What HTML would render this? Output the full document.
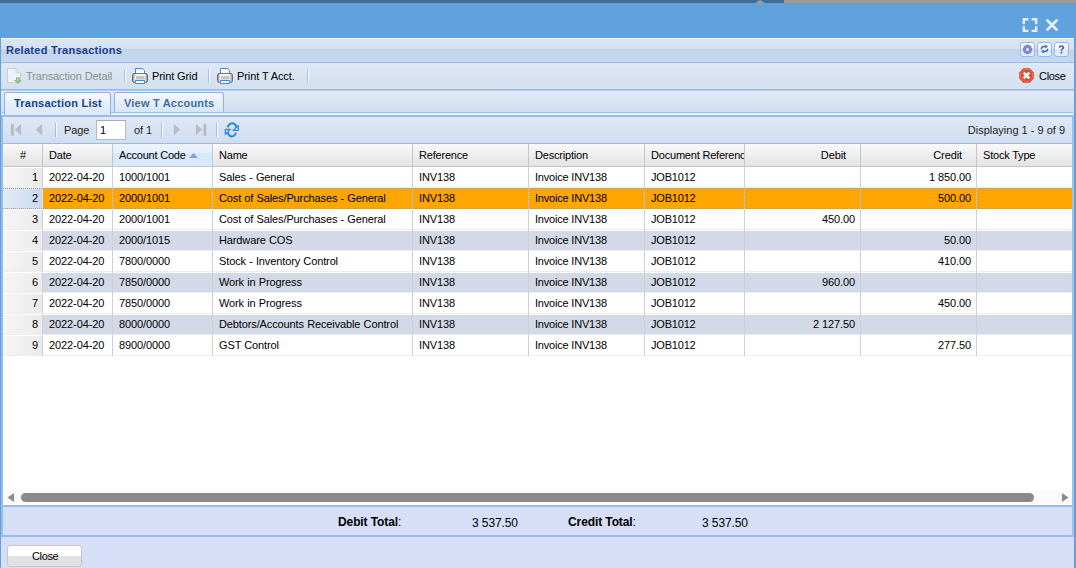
<!DOCTYPE html><html><head><meta charset="utf-8"><style>
*{box-sizing:border-box;margin:0;padding:0}
html,body{width:1076px;height:568px;overflow:hidden;background:#5fa2dd;font-family:"Liberation Sans",sans-serif;font-size:11px;color:#000}
div,span{position:absolute}
.t{white-space:nowrap;line-height:13px;letter-spacing:-0.1px}
.b{font-weight:bold;letter-spacing:0.15px}
.sep{width:2px;border-left:1px solid #98c0f4;border-right:1px solid #fff}
.hc{top:144px;height:23px;border-right:1px solid #c5c5c5;border-bottom:1px solid #c5c5c5;background:linear-gradient(#f9f9f9,#e3e4e6)}
.hc .t{top:5px}
.row{left:3px;width:1069px;height:21px;border-top:1px solid #fff;border-bottom:1px solid #ededed}
.cell{top:0;height:21px;border-right:1px solid #d0d0d0}
.nb{border-top:1px solid #fff;border-bottom:1px solid #ededed}
.cell .t{top:4px}
.nb .t{top:3px}
</style></head><body>
<div style="left:0;top:0;width:784px;height:3px;background:#436a94"></div>
<div style="left:784px;top:0;width:292px;height:3px;background:#9d9d9d"></div>
<div style="left:755px;top:0;width:0;height:0;border-left:5px solid transparent;border-right:5px solid transparent;border-bottom:3px solid #9d9d9d"></div>
<svg style="position:absolute;left:1022px;top:18px" width="16" height="16" viewBox="0 0 16 16" fill="none" stroke="#e6eef8" stroke-width="2.4">
<path d="M1.8 6.2V1.3H6.4M9.6 1.3H14.2V6.2M14.2 8.2V12.9H9.6M6.4 12.9H1.8V8.2"/></svg>
<svg style="position:absolute;left:1045px;top:18px" width="14" height="14" viewBox="0 0 14 14" fill="none" stroke="#e6eef8" stroke-width="2.8" stroke-linecap="round">
<path d="M2.5 2.5L11.5 11.5M11.5 2.5L2.5 11.5"/></svg>
<div style="left:1px;top:38px;width:1073px;height:530px;background:#d6dff7"></div>
<div style="left:1px;top:38px;width:1073px;height:25px;border-top:1px solid #f4f8fd;border-bottom:1px solid #99bbe8;background:linear-gradient(#d9e5f4 0,#d3e1f3 45%,#bccfea 46%,#c3d4ec 52%,#c6d7ed 100%)"></div>
<div class="t b" style="left:6px;top:44px;color:#15428b;letter-spacing:0.28px">Related Transactions</div>
<div style="left:1020px;top:42px;width:15px;height:15px;border:1px solid #94b8e6;border-radius:3px;background:linear-gradient(#fdfeff 0,#f3f8fe 45%,#dfeafa 50%,#e4eefb 100%)"></div>
<div style="left:1037px;top:42px;width:15px;height:15px;border:1px solid #94b8e6;border-radius:3px;background:linear-gradient(#fdfeff 0,#f3f8fe 45%,#dfeafa 50%,#e4eefb 100%)"></div>
<div style="left:1054px;top:42px;width:15px;height:15px;border:1px solid #94b8e6;border-radius:3px;background:linear-gradient(#fdfeff 0,#f3f8fe 45%,#dfeafa 50%,#e4eefb 100%)"></div>
<svg style="position:absolute;left:1022px;top:44px" width="11" height="11" viewBox="0 0 11 11">
<path d="M4.6 0.8H6.4L6.8 2.2L8.1 1.5L9.4 2.8L8.7 4.1L10.1 4.5V6.3L8.7 6.7L9.4 8L8.1 9.3L6.8 8.6L6.4 10H4.6L4.2 8.6L2.9 9.3L1.6 8L2.3 6.7L0.9 6.3V4.5L2.3 4.1L1.6 2.8L2.9 1.5L4.2 2.2Z" fill="#8089cc" stroke="#6570b8" stroke-width="0.5"/>
<circle cx="5.5" cy="5.4" r="1.5" fill="#e6eaf8"/></svg>
<svg style="position:absolute;left:1039px;top:44px" width="11" height="11" viewBox="0 0 11 11" fill="none" stroke="#4071b0" stroke-width="1.5">
<path d="M2.3 5.2C2.3 3.4 3.4 2.6 5.2 2.6H6.8"/><path d="M6.2 0.6L9 2.6L6.2 4.6Z" fill="#4071b0" stroke="none"/>
<path d="M8.7 4.8C8.7 6.6 7.6 7.6 5.8 7.6H4.2"/><path d="M4.8 5.6L2 7.6L4.8 9.6Z" fill="#4071b0" stroke="none"/></svg>
<svg style="position:absolute;left:1056px;top:44px" width="11" height="11" viewBox="0 0 11 11">
<path d="M2.6 3.6C2.6 2 3.8 1.3 5.3 1.3C7 1.3 8.3 2.1 8.3 3.6C8.3 5.2 6.2 5.4 6.2 6.8H4.6C4.6 4.8 6.4 4.6 6.4 3.7C6.4 3.1 6 2.8 5.4 2.8C4.8 2.8 4.4 3.1 4.4 3.8Z" fill="#3b6ba8"/>
<rect x="4.5" y="7.8" width="1.8" height="1.7" fill="#3b6ba8"/></svg>
<div style="left:1px;top:63px;width:1073px;height:27px;border-bottom:1px solid #99bbe8;background:linear-gradient(#dfe8f5,#d3e0f0)"></div>
<svg style="position:absolute;left:6px;top:68px" width="17" height="17" viewBox="0 0 17 17">
<path d="M1.5 0.5H10L14.5 5V14.5H1.5Z" fill="#eef1f6" stroke="#c9cdd3"/><path d="M10 0.5V5H14.5" fill="#e3e6ea" stroke="#d3d6da"/>
<path d="M10 9.2H13.8V12H16L11.9 16L7.8 12H10Z" fill="#86c086"/><path d="M11.2 10H12.6V12.8L11.9 13.6L11.2 12.8Z" fill="#b3dab3"/></svg>
<div class="t" style="left:26px;top:70px;color:#8d8d8d;letter-spacing:-0.12px">Transaction Detail</div>
<div class="sep" style="left:124px;top:69px;height:14px"></div>
<svg style="position:absolute;left:132px;top:68px" width="16" height="16" viewBox="0 0 16 16">
<defs><linearGradient id="pg132" x1="0" x2="1" y1="0" y2="0"><stop offset="0" stop-color="#8a8a8a"/><stop offset="0.2" stop-color="#f4f4f4"/><stop offset="0.8" stop-color="#f4f4f4"/><stop offset="1" stop-color="#8a8a8a"/></linearGradient></defs>
<path d="M3.5 0.5H10.5L12.5 2.5V7.5H3.5Z" fill="#fff" stroke="#3d86d8"/>
<path d="M2 5.5H14Q15.5 5.5 15.5 8V12.5Q15.5 14.5 13.5 14.5H2.5Q0.5 14.5 0.5 12.5V8Q0.5 5.5 2 5.5Z" fill="url(#pg132)" stroke="#555" stroke-width="0.8"/>
<rect x="4" y="8" width="8.5" height="3.5" fill="#c4c4c4"/>
<path d="M3.5 12.5H12.5V15.5H3.5Z" fill="#fff" stroke="#3d86d8"/></svg>
<div class="t" style="left:152px;top:70px">Print Grid</div>
<div class="sep" style="left:208px;top:69px;height:14px"></div>
<svg style="position:absolute;left:217px;top:68px" width="16" height="16" viewBox="0 0 16 16">
<defs><linearGradient id="pg217" x1="0" x2="1" y1="0" y2="0"><stop offset="0" stop-color="#8a8a8a"/><stop offset="0.2" stop-color="#f4f4f4"/><stop offset="0.8" stop-color="#f4f4f4"/><stop offset="1" stop-color="#8a8a8a"/></linearGradient></defs>
<path d="M3.5 0.5H10.5L12.5 2.5V7.5H3.5Z" fill="#fff" stroke="#3d86d8"/>
<path d="M2 5.5H14Q15.5 5.5 15.5 8V12.5Q15.5 14.5 13.5 14.5H2.5Q0.5 14.5 0.5 12.5V8Q0.5 5.5 2 5.5Z" fill="url(#pg217)" stroke="#555" stroke-width="0.8"/>
<rect x="4" y="8" width="8.5" height="3.5" fill="#c4c4c4"/>
<path d="M3.5 12.5H12.5V15.5H3.5Z" fill="#fff" stroke="#3d86d8"/></svg>
<div class="t" style="left:237px;top:70px">Print T Acct.</div>
<div class="sep" style="left:307px;top:69px;height:14px"></div>
<svg style="position:absolute;left:1019px;top:68px" width="15" height="15" viewBox="0 0 15 15">
<path d="M4.4 0.3H10.6L14.7 4.4V10.6L10.6 14.7H4.4L0.3 10.6V4.4Z" fill="#d23a22"/><path d="M4.8 1.6H10.2L13.4 4.8V10.2L10.2 13.4H4.8L1.6 10.2V4.8Z" fill="#e64a2e" stroke="#f28a72" stroke-width="0.7"/>
<path d="M4.7 4.7L10.3 10.3M10.3 4.7L4.7 10.3" stroke="#fff" stroke-width="2.5"/></svg>
<div class="t" style="left:1039px;top:70px;letter-spacing:-0.3px">Close</div>
<div style="left:1px;top:90px;width:1073px;height:27px;border-top:1px solid #b2cbec;background:linear-gradient(#e0eaf6,#cedcf0)"></div>
<div style="left:2px;top:112px;width:1071px;height:5px;border-top:1px solid #99bbe8;border-bottom:2px solid #99bbe8;background:#e8f0fa"></div>
<div style="left:4px;top:92px;width:107px;height:23px;border:1px solid #8db2e3;border-bottom:none;border-radius:3px 3px 0 0;background:linear-gradient(#fbfdff,#e2ecf9 60%,#dfe9f6)"></div>
<div class="t b" style="left:14px;top:97px;color:#15428b;letter-spacing:0.22px">Transaction List</div>
<div style="left:114px;top:92px;width:110px;height:20px;border:1px solid #8db2e3;border-bottom:none;border-radius:3px 3px 0 0;background:linear-gradient(#f5f9fe,#d7e5f7)"></div>
<div class="t b" style="left:124px;top:97px;color:#416da3;letter-spacing:0.2px">View T Accounts</div>
<div style="left:2px;top:117px;width:1071px;height:27px;border-bottom:1px solid #99bbe8;background:linear-gradient(#dfe8f5,#d1def0)"></div>
<svg style="position:absolute;left:10px;top:122px" width="40" height="16" viewBox="0 0 40 16"><rect x="1" y="2" width="2.8" height="11.8" rx="0.6" fill="#b6babf"/><path d="M11.2 1.8L4.8 7.6L11.2 13.4Z" fill="#b9bdc3"/><path d="M32.2 1.8L25.8 7.6L32.2 13.4Z" fill="#b9bdc3"/></svg>
<div class="sep" style="left:55px;top:123px;height:14px"></div>
<div class="t" style="left:64px;top:124px;color:#222">Page</div>
<div style="left:96px;top:120px;width:30px;height:20px;border:1px solid #b5b8c8;border-top-color:#a8aab8;background:#fff"></div>
<div class="t" style="left:100px;top:124px">1</div>
<div class="t" style="left:134px;top:124px;color:#222">of 1</div>
<div class="sep" style="left:161px;top:123px;height:14px"></div>
<svg style="position:absolute;left:170px;top:122px" width="40" height="16" viewBox="0 0 40 16"><path d="M3.8 1.8L10.2 7.6L3.8 13.4Z" fill="#b9bdc3"/><path d="M25.8 1.8L32.2 7.6L25.8 13.4Z" fill="#b9bdc3"/><rect x="33.5" y="2" width="2.8" height="11.8" rx="0.6" fill="#b6babf"/></svg>
<div class="sep" style="left:216px;top:123px;height:14px"></div>
<svg style="position:absolute;left:223px;top:121px" width="17" height="17" viewBox="0 0 17 17" fill="none" stroke="#2f86e0">
<path d="M4.6 6.4C5.6 3.6 7.6 2.1 9.6 2.2C11.6 2.4 12.8 3.8 13.2 6.6" stroke-width="2"/>
<path d="M15.3 4.4V9.5H10.2Z" fill="#b9dcfa" stroke-width="1.2" stroke-linejoin="round"/>
<path d="M12.8 11.6C12.2 14.2 10.4 15.5 8.6 15.4C6.6 15.3 5.2 13.6 4.8 11.2" stroke-width="2"/>
<path d="M2.3 8.4H7.4L2.3 13.5Z" fill="#b9dcfa" stroke-width="1.2" stroke-linejoin="round"/></svg>
<div class="t" style="right:11px;top:124px;color:#222;letter-spacing:0px">Displaying 1 - 9 of 9</div>
<div style="left:2px;top:144px;width:1071px;height:361px;background:#fff;border-left:1px solid #99bbe8"></div>
<div class="hc" style="left:3px;width:40px;"><div class="t" style="left:17px">#</div></div>
<div class="hc" style="left:43px;width:70px;"><div class="t" style="left:6px;overflow:hidden;width:63px;letter-spacing:-0.2px">Date</div></div>
<div class="hc" style="left:113px;width:100px;background:linear-gradient(#ebf3fd 0,#e6f0fc 40%,#d9e8fb 42%,#d9e8fb 100%);border-right-color:#b3cdee;"><div class="t" style="left:6px;overflow:hidden;width:93px;letter-spacing:-0.2px">Account Code</div></div>
<div class="hc" style="left:213px;width:200px;"><div class="t" style="left:6px;overflow:hidden;width:193px;letter-spacing:-0.2px">Name</div></div>
<div class="hc" style="left:413px;width:116px;"><div class="t" style="left:6px;overflow:hidden;width:109px;letter-spacing:-0.2px">Reference</div></div>
<div class="hc" style="left:529px;width:116px;"><div class="t" style="left:6px;overflow:hidden;width:109px;letter-spacing:-0.2px">Description</div></div>
<div class="hc" style="left:645px;width:100px;"><div class="t" style="left:6px;overflow:hidden;width:93px;letter-spacing:-0.2px">Document Reference</div></div>
<div class="hc" style="left:745px;width:116px;"><div class="t" style="right:14px">Debit</div></div>
<div class="hc" style="left:861px;width:116px;"><div class="t" style="right:14px">Credit</div></div>
<div class="hc" style="left:977px;width:96px;"><div class="t" style="left:6px;overflow:hidden;width:89px;letter-spacing:-0.2px">Stock Type</div></div>
<svg style="position:absolute;left:189px;top:153px" width="9" height="5" viewBox="0 0 9 5"><path d="M0 5L4.5 0L9 5Z" fill="#7fa5d6"/></svg>
<div class="row" style="top:167px;background:#fff;"></div>
<div class="cell nb" style="top:167px;left:3px;width:40px;background:linear-gradient(90deg,#f5f5f5,#ebebeb);"><div class="t" style="right:4px">1</div></div>
<div class="cell" style="top:167px;left:43px;width:70px;"><div class="t" style="left:6px;">2022-04-20</div></div>
<div class="cell" style="top:167px;left:113px;width:100px;"><div class="t" style="left:6px;">1000/1001</div></div>
<div class="cell" style="top:167px;left:213px;width:200px;"><div class="t" style="left:6px;letter-spacing:-0.12px;word-spacing:0.3px;">Sales - General</div></div>
<div class="cell" style="top:167px;left:413px;width:116px;"><div class="t" style="left:6px;">INV138</div></div>
<div class="cell" style="top:167px;left:529px;width:116px;"><div class="t" style="left:6px;letter-spacing:-0.2px;">Invoice INV138</div></div>
<div class="cell" style="top:167px;left:645px;width:100px;"><div class="t" style="left:6px;letter-spacing:-0.2px;">JOB1012</div></div>
<div class="cell" style="top:167px;left:745px;width:116px;"></div>
<div class="cell" style="top:167px;left:861px;width:116px;"><div class="t" style="right:5px">1 850.00</div></div>
<div class="cell" style="top:167px;left:977px;width:96px;"></div>
<div class="row" style="top:188px;background:#ffa500;border-color:#ffa500;"></div>
<div class="cell nb" style="top:188px;left:3px;width:40px;background:linear-gradient(90deg,#e3ecf8,#c8d9ef);border-top-color:#d9e5f4;border-bottom-color:#d0def1;border-right:1px dotted #d8d8d8;"><div class="t" style="right:4px">2</div></div>
<div class="cell" style="top:188px;left:43px;width:70px;border-right:1px dotted #d8d8d8;"><div class="t" style="left:6px;">2022-04-20</div></div>
<div class="cell" style="top:188px;left:113px;width:100px;border-right:1px dotted #d8d8d8;"><div class="t" style="left:6px;">2000/1001</div></div>
<div class="cell" style="top:188px;left:213px;width:200px;border-right:1px dotted #d8d8d8;"><div class="t" style="left:6px;letter-spacing:-0.12px;word-spacing:0.3px;">Cost of Sales/Purchases - General</div></div>
<div class="cell" style="top:188px;left:413px;width:116px;border-right:1px dotted #d8d8d8;"><div class="t" style="left:6px;">INV138</div></div>
<div class="cell" style="top:188px;left:529px;width:116px;border-right:1px dotted #d8d8d8;"><div class="t" style="left:6px;letter-spacing:-0.2px;">Invoice INV138</div></div>
<div class="cell" style="top:188px;left:645px;width:100px;border-right:1px dotted #d8d8d8;"><div class="t" style="left:6px;letter-spacing:-0.2px;">JOB1012</div></div>
<div class="cell" style="top:188px;left:745px;width:116px;border-right:1px dotted #d8d8d8;"></div>
<div class="cell" style="top:188px;left:861px;width:116px;border-right:1px dotted #d8d8d8;"><div class="t" style="right:5px">500.00</div></div>
<div class="cell" style="top:188px;left:977px;width:96px;border-right:1px dotted #d8d8d8;"></div>
<div class="row" style="top:209px;background:#fff;"></div>
<div class="cell nb" style="top:209px;left:3px;width:40px;background:linear-gradient(90deg,#f5f5f5,#ebebeb);"><div class="t" style="right:4px">3</div></div>
<div class="cell" style="top:209px;left:43px;width:70px;"><div class="t" style="left:6px;">2022-04-20</div></div>
<div class="cell" style="top:209px;left:113px;width:100px;"><div class="t" style="left:6px;">2000/1001</div></div>
<div class="cell" style="top:209px;left:213px;width:200px;"><div class="t" style="left:6px;letter-spacing:-0.12px;word-spacing:0.3px;">Cost of Sales/Purchases - General</div></div>
<div class="cell" style="top:209px;left:413px;width:116px;"><div class="t" style="left:6px;">INV138</div></div>
<div class="cell" style="top:209px;left:529px;width:116px;"><div class="t" style="left:6px;letter-spacing:-0.2px;">Invoice INV138</div></div>
<div class="cell" style="top:209px;left:645px;width:100px;"><div class="t" style="left:6px;letter-spacing:-0.2px;">JOB1012</div></div>
<div class="cell" style="top:209px;left:745px;width:116px;"><div class="t" style="right:5px">450.00</div></div>
<div class="cell" style="top:209px;left:861px;width:116px;"></div>
<div class="cell" style="top:209px;left:977px;width:96px;"></div>
<div class="row" style="top:230px;background:#d3d9e6;"></div>
<div class="cell nb" style="top:230px;left:3px;width:40px;background:linear-gradient(90deg,#f5f5f5,#ebebeb);"><div class="t" style="right:4px">4</div></div>
<div class="cell" style="top:230px;left:43px;width:70px;"><div class="t" style="left:6px;">2022-04-20</div></div>
<div class="cell" style="top:230px;left:113px;width:100px;"><div class="t" style="left:6px;">2000/1015</div></div>
<div class="cell" style="top:230px;left:213px;width:200px;"><div class="t" style="left:6px;letter-spacing:-0.12px;word-spacing:0.3px;">Hardware COS</div></div>
<div class="cell" style="top:230px;left:413px;width:116px;"><div class="t" style="left:6px;">INV138</div></div>
<div class="cell" style="top:230px;left:529px;width:116px;"><div class="t" style="left:6px;letter-spacing:-0.2px;">Invoice INV138</div></div>
<div class="cell" style="top:230px;left:645px;width:100px;"><div class="t" style="left:6px;letter-spacing:-0.2px;">JOB1012</div></div>
<div class="cell" style="top:230px;left:745px;width:116px;"></div>
<div class="cell" style="top:230px;left:861px;width:116px;"><div class="t" style="right:5px">50.00</div></div>
<div class="cell" style="top:230px;left:977px;width:96px;"></div>
<div class="row" style="top:251px;background:#fff;"></div>
<div class="cell nb" style="top:251px;left:3px;width:40px;background:linear-gradient(90deg,#f5f5f5,#ebebeb);"><div class="t" style="right:4px">5</div></div>
<div class="cell" style="top:251px;left:43px;width:70px;"><div class="t" style="left:6px;">2022-04-20</div></div>
<div class="cell" style="top:251px;left:113px;width:100px;"><div class="t" style="left:6px;">7800/0000</div></div>
<div class="cell" style="top:251px;left:213px;width:200px;"><div class="t" style="left:6px;letter-spacing:-0.12px;word-spacing:0.3px;">Stock - Inventory Control</div></div>
<div class="cell" style="top:251px;left:413px;width:116px;"><div class="t" style="left:6px;">INV138</div></div>
<div class="cell" style="top:251px;left:529px;width:116px;"><div class="t" style="left:6px;letter-spacing:-0.2px;">Invoice INV138</div></div>
<div class="cell" style="top:251px;left:645px;width:100px;"><div class="t" style="left:6px;letter-spacing:-0.2px;">JOB1012</div></div>
<div class="cell" style="top:251px;left:745px;width:116px;"></div>
<div class="cell" style="top:251px;left:861px;width:116px;"><div class="t" style="right:5px">410.00</div></div>
<div class="cell" style="top:251px;left:977px;width:96px;"></div>
<div class="row" style="top:272px;background:#d3d9e6;"></div>
<div class="cell nb" style="top:272px;left:3px;width:40px;background:linear-gradient(90deg,#f5f5f5,#ebebeb);"><div class="t" style="right:4px">6</div></div>
<div class="cell" style="top:272px;left:43px;width:70px;"><div class="t" style="left:6px;">2022-04-20</div></div>
<div class="cell" style="top:272px;left:113px;width:100px;"><div class="t" style="left:6px;">7850/0000</div></div>
<div class="cell" style="top:272px;left:213px;width:200px;"><div class="t" style="left:6px;letter-spacing:-0.12px;word-spacing:0.3px;">Work in Progress</div></div>
<div class="cell" style="top:272px;left:413px;width:116px;"><div class="t" style="left:6px;">INV138</div></div>
<div class="cell" style="top:272px;left:529px;width:116px;"><div class="t" style="left:6px;letter-spacing:-0.2px;">Invoice INV138</div></div>
<div class="cell" style="top:272px;left:645px;width:100px;"><div class="t" style="left:6px;letter-spacing:-0.2px;">JOB1012</div></div>
<div class="cell" style="top:272px;left:745px;width:116px;"><div class="t" style="right:5px">960.00</div></div>
<div class="cell" style="top:272px;left:861px;width:116px;"></div>
<div class="cell" style="top:272px;left:977px;width:96px;"></div>
<div class="row" style="top:293px;background:#fff;"></div>
<div class="cell nb" style="top:293px;left:3px;width:40px;background:linear-gradient(90deg,#f5f5f5,#ebebeb);"><div class="t" style="right:4px">7</div></div>
<div class="cell" style="top:293px;left:43px;width:70px;"><div class="t" style="left:6px;">2022-04-20</div></div>
<div class="cell" style="top:293px;left:113px;width:100px;"><div class="t" style="left:6px;">7850/0000</div></div>
<div class="cell" style="top:293px;left:213px;width:200px;"><div class="t" style="left:6px;letter-spacing:-0.12px;word-spacing:0.3px;">Work in Progress</div></div>
<div class="cell" style="top:293px;left:413px;width:116px;"><div class="t" style="left:6px;">INV138</div></div>
<div class="cell" style="top:293px;left:529px;width:116px;"><div class="t" style="left:6px;letter-spacing:-0.2px;">Invoice INV138</div></div>
<div class="cell" style="top:293px;left:645px;width:100px;"><div class="t" style="left:6px;letter-spacing:-0.2px;">JOB1012</div></div>
<div class="cell" style="top:293px;left:745px;width:116px;"></div>
<div class="cell" style="top:293px;left:861px;width:116px;"><div class="t" style="right:5px">450.00</div></div>
<div class="cell" style="top:293px;left:977px;width:96px;"></div>
<div class="row" style="top:314px;background:#d3d9e6;"></div>
<div class="cell nb" style="top:314px;left:3px;width:40px;background:linear-gradient(90deg,#f5f5f5,#ebebeb);"><div class="t" style="right:4px">8</div></div>
<div class="cell" style="top:314px;left:43px;width:70px;"><div class="t" style="left:6px;">2022-04-20</div></div>
<div class="cell" style="top:314px;left:113px;width:100px;"><div class="t" style="left:6px;">8000/0000</div></div>
<div class="cell" style="top:314px;left:213px;width:200px;"><div class="t" style="left:6px;letter-spacing:-0.12px;word-spacing:0.3px;">Debtors/Accounts Receivable Control</div></div>
<div class="cell" style="top:314px;left:413px;width:116px;"><div class="t" style="left:6px;">INV138</div></div>
<div class="cell" style="top:314px;left:529px;width:116px;"><div class="t" style="left:6px;letter-spacing:-0.2px;">Invoice INV138</div></div>
<div class="cell" style="top:314px;left:645px;width:100px;"><div class="t" style="left:6px;letter-spacing:-0.2px;">JOB1012</div></div>
<div class="cell" style="top:314px;left:745px;width:116px;"><div class="t" style="right:5px">2 127.50</div></div>
<div class="cell" style="top:314px;left:861px;width:116px;"></div>
<div class="cell" style="top:314px;left:977px;width:96px;"></div>
<div class="row" style="top:335px;background:#fff;"></div>
<div class="cell nb" style="top:335px;left:3px;width:40px;background:linear-gradient(90deg,#f5f5f5,#ebebeb);"><div class="t" style="right:4px">9</div></div>
<div class="cell" style="top:335px;left:43px;width:70px;"><div class="t" style="left:6px;">2022-04-20</div></div>
<div class="cell" style="top:335px;left:113px;width:100px;"><div class="t" style="left:6px;">8900/0000</div></div>
<div class="cell" style="top:335px;left:213px;width:200px;"><div class="t" style="left:6px;letter-spacing:-0.12px;word-spacing:0.3px;">GST Control</div></div>
<div class="cell" style="top:335px;left:413px;width:116px;"><div class="t" style="left:6px;">INV138</div></div>
<div class="cell" style="top:335px;left:529px;width:116px;"><div class="t" style="left:6px;letter-spacing:-0.2px;">Invoice INV138</div></div>
<div class="cell" style="top:335px;left:645px;width:100px;"><div class="t" style="left:6px;letter-spacing:-0.2px;">JOB1012</div></div>
<div class="cell" style="top:335px;left:745px;width:116px;"></div>
<div class="cell" style="top:335px;left:861px;width:116px;"><div class="t" style="right:5px">277.50</div></div>
<div class="cell" style="top:335px;left:977px;width:96px;"></div>
<div style="left:3px;top:188px;width:1069px;height:21px;border-top:1px dotted #a0a0a0;border-bottom:1px dotted #a0a0a0"></div>
<div style="left:3px;top:490px;width:1069px;height:15px;background:#fafafa"></div>
<svg style="position:absolute;left:7px;top:493px" width="8" height="9" viewBox="0 0 8 9"><path d="M7 0V9L0.5 4.5Z" fill="#8a8a8a"/></svg>
<div style="left:21px;top:493px;width:1013px;height:9px;border-radius:5px;background:#8a8a8a"></div>
<svg style="position:absolute;left:1061px;top:493px" width="8" height="9" viewBox="0 0 8 9"><path d="M1 0V9L7.5 4.5Z" fill="#8a8a8a"/></svg>
<div style="left:2px;top:505px;width:1071px;height:32px;border-top:2px solid #99bbe8;border-bottom:2px solid #99bbe8;background:#d6dff7"></div>
<div class="t" style="left:338px;top:515px;font-size:12px;line-height:14px"><b>Debit Total</b>:</div>
<div class="t" style="left:472px;top:516px;font-size:12px;line-height:14px">3 537.50</div>
<div class="t" style="left:568px;top:515px;font-size:12px;line-height:14px"><b>Credit Total</b>:</div>
<div class="t" style="left:702px;top:516px;font-size:12px;line-height:14px">3 537.50</div>
<div style="left:7px;top:545px;width:75px;height:22px;border:1px solid #c6c6c6;border-radius:3px;background:linear-gradient(#fff 0,#fff 50%,#e2e2e2 50%,#e2e2e2 100%)"></div>
<div class="t" style="left:32px;top:550px;letter-spacing:-0.35px">Close</div>
<div style="left:1px;top:115px;width:2px;height:422px;background:#99bbe8"></div>
<div style="left:1072px;top:115px;width:2px;height:422px;background:#a3c2ea"></div>
</body></html>
